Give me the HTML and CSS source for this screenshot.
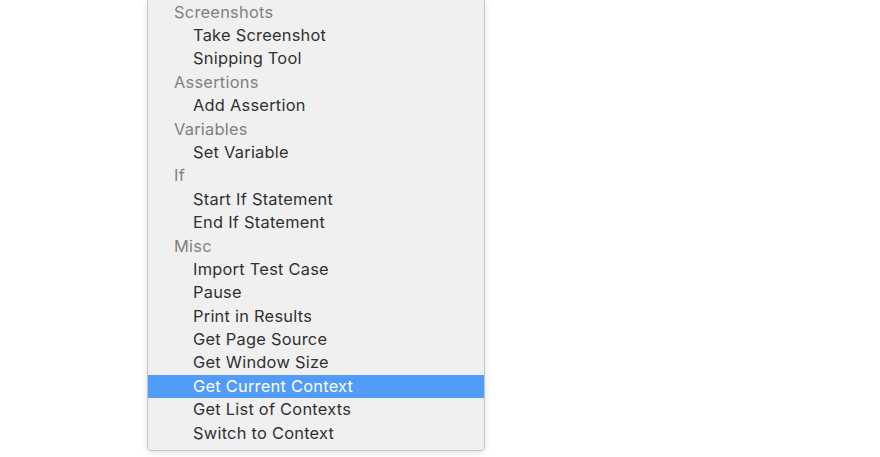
FILE: index.html
```html
<!DOCTYPE html>
<html>
<head>
<meta charset="utf-8">
<link rel="stylesheet" href="styles.css">
</head>
<body>
<div class="page">
  <div class="menu">
    <div class="row header">Screenshots</div>
    <div class="row item">Take Screenshot</div>
    <div class="row item">Snipping Tool</div>
    <div class="row header">Assertions</div>
    <div class="row item">Add Assertion</div>
    <div class="row header">Variables</div>
    <div class="row item">Set Variable</div>
    <div class="row header">If</div>
    <div class="row item">Start If Statement</div>
    <div class="row item">End If Statement</div>
    <div class="row header">Misc</div>
    <div class="row item">Import Test Case</div>
    <div class="row item">Pause</div>
    <div class="row item">Print in Results</div>
    <div class="row item">Get Page Source</div>
    <div class="row item">Get Window Size</div>
    <div class="row item selected">Get Current Context</div>
    <div class="row item">Get List of Contexts</div>
    <div class="row item">Switch to Context</div>
  </div>
</div>
</body>
</html>
```

FILE: styles.css
```css
html, body {
  margin: 0;
  padding: 0;
  background: #ffffff;
}
.page {
  width: 880px;
  height: 457px;
  overflow: hidden;
  padding-left: 147px;
  box-sizing: border-box;
}
.menu {
  width: 338px;
  box-sizing: border-box;
  background: #f0f0f0;
  border: 1px solid #c6c6c6;
  border-top: none;
  border-radius: 0 0 5px 5px;
  padding: 0.6px 0 5px 0;
  box-shadow: 0 2px 6px rgba(0,0,0,0.12);
  font-family: Inter, "Liberation Sans", sans-serif;
  font-size: 16.4px;
  letter-spacing: 0.25px;
}
.row {
  height: 23.4px;
  line-height: 23.4px;
  white-space: nowrap;
}
.header {
  padding-left: 26px;
  color: #808080;
}
.item {
  padding-left: 45px;
  color: #303030;
}
.selected {
  background: #519cf9;
  color: #ffffff;
}
```
